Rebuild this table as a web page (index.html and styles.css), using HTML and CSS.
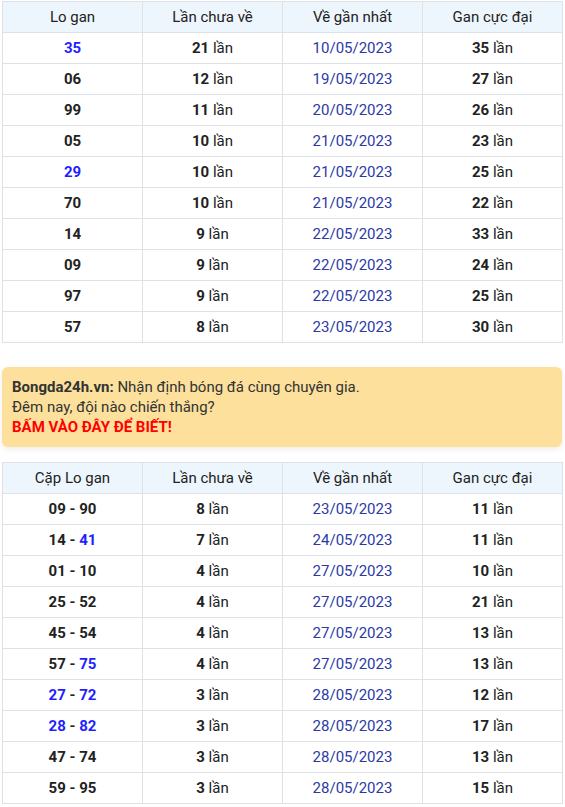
FILE: index.html
```html
<!DOCTYPE html>
<html>
<head>
<meta charset="utf-8">
<link rel="stylesheet" href="styles.css">
</head>
<body>
<div class="page">
<table class="tbl">
<thead><tr><th>Lo gan</th><th>Lần chưa về</th><th>Về gần nhất</th><th>Gan cực đại</th></tr></thead>
<tbody>
<tr><td class="num hl">35</td><td><b>21</b> lần</td><td class="date">10/05/2023</td><td><b>35</b> lần</td></tr>
<tr><td class="num">06</td><td><b>12</b> lần</td><td class="date">19/05/2023</td><td><b>27</b> lần</td></tr>
<tr><td class="num">99</td><td><b>11</b> lần</td><td class="date">20/05/2023</td><td><b>26</b> lần</td></tr>
<tr><td class="num">05</td><td><b>10</b> lần</td><td class="date">21/05/2023</td><td><b>23</b> lần</td></tr>
<tr><td class="num hl">29</td><td><b>10</b> lần</td><td class="date">21/05/2023</td><td><b>25</b> lần</td></tr>
<tr><td class="num">70</td><td><b>10</b> lần</td><td class="date">21/05/2023</td><td><b>22</b> lần</td></tr>
<tr><td class="num">14</td><td><b>9</b> lần</td><td class="date">22/05/2023</td><td><b>33</b> lần</td></tr>
<tr><td class="num">09</td><td><b>9</b> lần</td><td class="date">22/05/2023</td><td><b>24</b> lần</td></tr>
<tr><td class="num">97</td><td><b>9</b> lần</td><td class="date">22/05/2023</td><td><b>25</b> lần</td></tr>
<tr><td class="num">57</td><td><b>8</b> lần</td><td class="date">23/05/2023</td><td><b>30</b> lần</td></tr>
</tbody>
</table>

<div class="promo">
<div><b>Bongda24h.vn:</b> Nhận định bóng đá cùng chuyên gia.</div>
<div>Đêm nay, đội nào chiến thắng?</div>
<div class="cta">BẤM VÀO ĐÂY ĐỂ BIẾT!</div>
</div>

<table class="tbl">
<thead><tr><th>Cặp Lo gan</th><th>Lần chưa về</th><th>Về gần nhất</th><th>Gan cực đại</th></tr></thead>
<tbody>
<tr><td class="num">09 - 90</td><td><b>8</b> lần</td><td class="date">23/05/2023</td><td><b>11</b> lần</td></tr>
<tr><td class="num">14 - <span class="hl">41</span></td><td><b>7</b> lần</td><td class="date">24/05/2023</td><td><b>11</b> lần</td></tr>
<tr><td class="num">01 - 10</td><td><b>4</b> lần</td><td class="date">27/05/2023</td><td><b>10</b> lần</td></tr>
<tr><td class="num">25 - 52</td><td><b>4</b> lần</td><td class="date">27/05/2023</td><td><b>21</b> lần</td></tr>
<tr><td class="num">45 - 54</td><td><b>4</b> lần</td><td class="date">27/05/2023</td><td><b>13</b> lần</td></tr>
<tr><td class="num">57 - <span class="hl">75</span></td><td><b>4</b> lần</td><td class="date">27/05/2023</td><td><b>13</b> lần</td></tr>
<tr><td class="num"><span class="hl">27</span> - <span class="hl">72</span></td><td><b>3</b> lần</td><td class="date">28/05/2023</td><td><b>12</b> lần</td></tr>
<tr><td class="num"><span class="hl">28</span> - <span class="hl">82</span></td><td><b>3</b> lần</td><td class="date">28/05/2023</td><td><b>17</b> lần</td></tr>
<tr><td class="num">47 - 74</td><td><b>3</b> lần</td><td class="date">28/05/2023</td><td><b>13</b> lần</td></tr>
<tr><td class="num">59 - 95</td><td><b>3</b> lần</td><td class="date">28/05/2023</td><td><b>15</b> lần</td></tr>
</tbody>
</table>
</div>
</body>
</html>
```

FILE: styles.css
```css
html, body {
  margin: 0;
  padding: 0;
  background: #fff;
}
body {
  font-family: Roboto, "Liberation Sans", sans-serif;
  font-size: 15px;
  color: #222;
}
.page {
  padding: 1px 3px 0 2px;
}
.tbl {
  width: 561px;
  border-collapse: collapse;
  table-layout: fixed;
}
.tbl th, .tbl td {
  border: 1px solid #dee2e6;
  text-align: center;
  height: 30px;
  padding: 0;
  line-height: 20px;
  color: #222;
}
.tbl th {
  background: #eef6fd;
  font-weight: 400;
}
.tbl b, .tbl td.num {
  font-weight: 700;
}
.tbl .hl {
  color: #1f1fff;
}
.tbl td.date {
  color: #2b3aa6;
}
.promo {
  margin: 24px 0 15px;
  background: #fce09c;
  border-radius: 6px;
  padding: 10px 10px;
  line-height: 20px;
  color: #333;
  box-shadow: 0 2px 6px rgba(0,0,0,0.08);
}
.promo b {
  font-weight: 700;
}
.cta {
  color: #ff0000;
  font-weight: 700;
}
```
